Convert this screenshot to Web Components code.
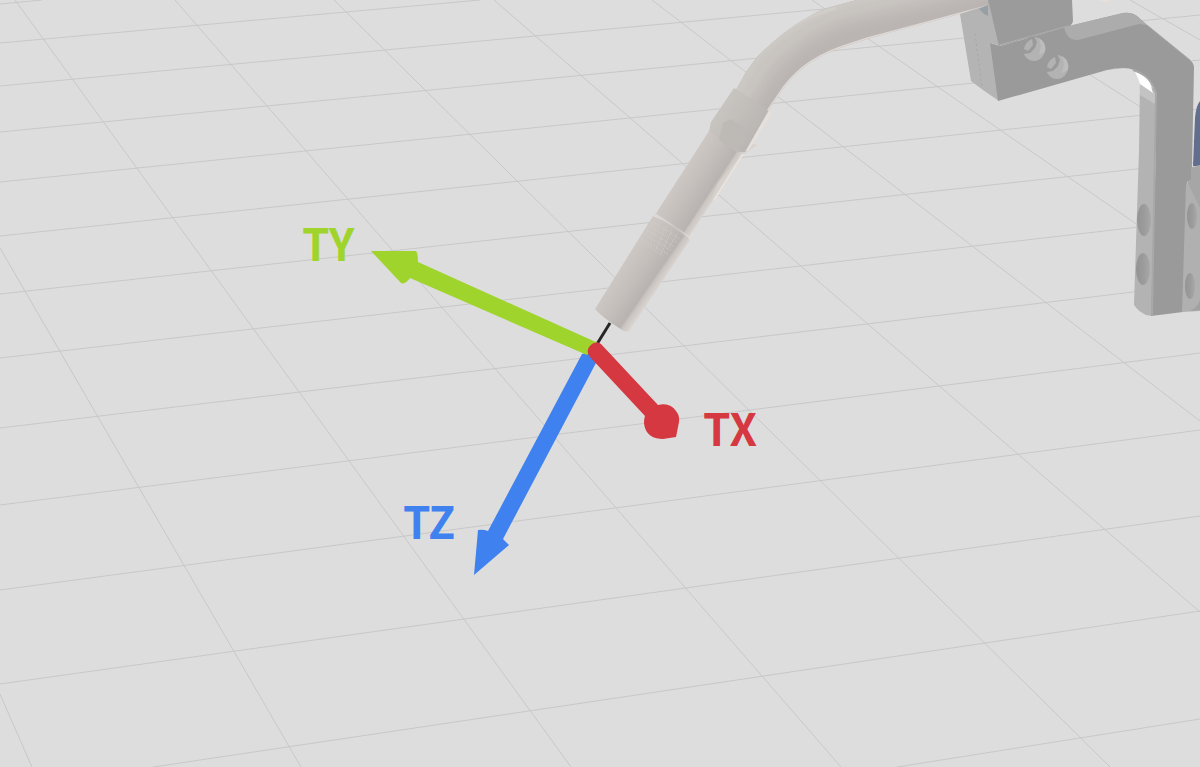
<!DOCTYPE html>
<html lang="en">
<head>
<meta charset="utf-8">
<title>Tool coordinate system</title>
<style>
  html, body { margin: 0; height: 100%; background: #ddd; }
  body { font-family: "Noto Sans CJK SC", "Noto Sans", sans-serif; }
</style>
</head>
<body>
<robot-viewport>
  <floor-grid></floor-grid>
  <robot-tool></robot-tool>
  <axis-gizmo></axis-gizmo>
</robot-viewport>

<script>
const LAYER = `
  :host { display: block; min-width: 0; min-height: 0; overflow: hidden; }
  svg { display: block; width: 100%; height: 100%; }
`;
const VIEW = 'viewBox="0 0 1200 767" preserveAspectRatio="xMidYMid slice"';

class SceneElement extends HTMLElement {
  constructor() {
    super();
    this.attachShadow({ mode: 'open' }).innerHTML = this.template();
  }
}

/* Stacks every scene layer in one grid cell that fills the window. */
customElements.define('robot-viewport', class extends SceneElement {
  template() {
    return `<style>
      :host { display: grid; grid-template: minmax(0, 1fr) / minmax(0, 1fr); height: 100vh; background: #ddd; overflow: hidden; }
      ::slotted(*) { grid-area: 1 / 1; }
    </style><slot></slot>`;
  }
});

/* Floor plane in perspective: x1, y1, x2, y2 of each line. */
customElements.define('floor-grid', class extends SceneElement {
  template() {
    const lines = [
      [0,4,42,0],[0,43,480,0],[0,86,920,0],[0,132,1200,15],[0,182,1200,60],
      [0,236,1200,109],[0,294,1200,162],[0,358,1200,220],[0,428,1200,284],
      [0,505,1200,353],[0,590,1200,430],[0,684,1200,516],[153,767,1200,611],[897,767,1200,719],
      [0,694,32,767],[0,248,301,767],[15,0,571,767],[175,0,841,767],[334,0,1110,767],
      [494,0,1200,612],[652,0,1200,421],[812,0,1200,268],[973,0,1200,145],[1130,0,1200,40]
    ];
    return `<style>${LAYER} path { stroke: #c8c8c8; stroke-width: 1; fill: none; }</style>
      <svg ${VIEW} aria-hidden="true"><path d="${lines.map(([a,b,c,d]) => `M${a} ${b}L${c} ${d}`).join('')}"/></svg>`;
  }
});

customElements.define('robot-tool', class extends SceneElement {
  template() {
    return `<style>${LAYER}</style>
    <svg ${VIEW} role="img" aria-label="Welding torch on mounting bracket">
      <defs>
        <linearGradient id="nozzle" gradientUnits="userSpaceOnUse" x1="625" y1="260" x2="660" y2="284">
          <stop offset="0" stop-color="#cdc8c4"/><stop offset=".45" stop-color="#c3beba"/>
          <stop offset=".8" stop-color="#b8b3b0"/><stop offset=".86" stop-color="#c9c4c0"/><stop offset="1" stop-color="#d8d3cf"/>
        </linearGradient>
        <linearGradient id="tube" gradientUnits="userSpaceOnUse" x1="683" y1="170" x2="718" y2="193">
          <stop offset="0" stop-color="#cdc8c4"/><stop offset=".4" stop-color="#c4bfbb"/>
          <stop offset=".82" stop-color="#b8b3b0"/><stop offset=".86" stop-color="#cac5c1"/><stop offset="1" stop-color="#d8d3cf"/>
        </linearGradient>
        <linearGradient id="sleeve" gradientUnits="userSpaceOnUse" x1="720" y1="108" x2="759" y2="132">
          <stop offset="0" stop-color="#c8c4c0"/><stop offset=".5" stop-color="#c1bdb9"/><stop offset="1" stop-color="#b9b5b2"/>
        </linearGradient>
        <linearGradient id="hole" x1="0" x2="1" y1="0" y2="0">
          <stop offset="0" stop-color="#949494"/><stop offset=".5" stop-color="#9b9b9b"/><stop offset="1" stop-color="#a8a8a8"/>
        </linearGradient>
        <filter id="soft" filterUnits="userSpaceOnUse" x="690" y="-60" width="330" height="220"><feGaussianBlur stdDeviation="2"/></filter>
        <clipPath id="bend"><path d="M736 90L746 72L757 57Q767 47 780 36Q795 24 810 16Q818 11 827 8L860 -1H990V6L907 28L867 39L840 48Q828 52 820 57Q810 62 803 68Q792 77 783 89L768 111L757 132L725 112Z"/></clipPath>
      </defs>

      <!-- bent neck -->
      <g clip-path="url(#bend)" fill="none">
        <rect x="700" y="0" width="300" height="140" fill="#bab5b2"/>
        <g filter="url(#soft)">
          <path d="M724 110L752 62Q784 20 840 3L990 -38" stroke="#ccc8c4" stroke-width="26"/>
          <path d="M736 113L762 69Q796 27 847 13L990 -21" stroke="#c8c4c0" stroke-width="11"/>
          <path d="M743 117L769 75Q801 35 850 20L990 -13" stroke="#c2beba" stroke-width="8"/>
          <path d="M749 121L774 81Q804 42 852 27L990 -6" stroke="#bdb8b5" stroke-width="7"/>
        </g>
        <path d="M776 38Q800 18 836 8" stroke="#d1cdc9" stroke-width="3"/>
        <path d="M768 111L783 89Q792 77 803 68Q820 55 840 48L867 39L990 6" stroke="#ddd8d4" stroke-width="3"/>
      </g>

      <!-- torch body -->
      <path d="M655 215L709 131L757 145L743 155L688 238Z" fill="url(#tube)"/>
      <path d="M709 132L711 122L734 88L752 99L767 110L771 112L746 152L740 152L728 147L716 136Z" fill="url(#sleeve)"/>
      <path d="M719 140L723 123L731 119L746 128L743 142L737 152L728 147Z" fill="#bdb9b5"/>
      <path d="M769 110L772 113L749 150L745 152Z" fill="#e5e0dc"/>
      <path d="M742 154L743 156L715 200L712 199L718 183Z" fill="#d6d1cd"/>
      <path d="M743 154L714 200" stroke="#e9e4e0" stroke-width="2"/>
      <path d="M655 214L689 237" stroke="#dcd7d4" stroke-width="2"/>

      <!-- nozzle -->
      <path d="M653 216L655 217Q677 225 690 240L629 331Q626 333 619 328Q603 318 595 309Z" fill="url(#nozzle)"/>
      <path d="M654 218Q676 226 688 239" stroke="#cbc6c3" fill="none"/>
      <path d="M653 222L680 239M650 226L678 243M647 230L675 247M644 234L672 251M641 238L669 255M643 242L663 256" stroke="#d6d1cd" stroke-dasharray="1 2" fill="none"/>
      <path d="M660 222L651 238M666 226L656 250M672 230L661 254M677 234L669 248" stroke="#d0cbc7" stroke-dasharray="1 1" fill="none"/>
      <path d="M610 323L597 344" stroke="#262626" stroke-width="3"/>

      <!-- far objects cut by the window edge -->
      <path d="M1098 0H1111L1106 2L1101 1Z" fill="#e9e0da"/>
      <path d="M1200 101Q1196 106 1195 118L1193 166H1200Z" fill="#626e8e"/>

      <!-- bracket, lit side faces -->
      <path d="M960 14L988 5V0L1000 46L991 43L999 101L983 90L971 81Z" fill="#b4b4b4"/>
      <path d="M979 9L988 5V16L984 14Z" fill="#96a0a4"/>
      <path d="M975 34L982 88" stroke="#a6a6a6" stroke-dasharray="2 3"/>
      <path d="M1140 80L1157 91L1155 150L1152 316L1146 315Q1138 311 1134 305L1139 150Z" fill="#b3b3b3"/>
      <path d="M1140 83L1155 93V104L1140 95Z" fill="#c3c3c3"/>

      <!-- bracket, dark front faces -->
      <path d="M990 43L1000 46L1066 27L1123 13Q1131 12 1137 16L1147 25L1190 60Q1194 63 1194 68L1192 166L1191 180L1187 182L1183 312L1151 316L1156 150V93Q1153 82 1146 77Q1135 68 1123 68Q1115 68 1107 70L998 101Z" fill="#9a9a9a"/>
      <path d="M988 0H1072L1073 21Q1072 25 1068 27L999 46Z" fill="#9b9b9b"/>
      <path d="M999 45L1068 26" stroke="#adadad" fill="none"/>
      <path d="M1064 27L1123 13Q1131 12 1137 16L1147 25L1139 24L1078 40Q1067 41 1064 27Z" fill="#acacac"/>
      <path d="M1147 25L1190 60" stroke="#a8a8a8"/>
      <path d="M1133 70Q1150 75 1156 93L1155 150L1152 315" stroke="#a8a8a8" stroke-width="2" fill="none"/>
      <path d="M1135 72Q1146 76 1150 83L1153 93L1140 84Q1138 77 1135 72Z" fill="#fff"/>

      <!-- bolts in the arm -->
      <g id="bolt">
        <ellipse cx="1034" cy="49" rx="11" ry="12" fill="#b3b3b3"/>
        <path d="M1039 38Q1047 43 1045 52L1039 55L1041 46Z" fill="#bdbdbd"/>
        <path d="M1022 55Q1019 38 1034 36L1037 42L1035 48L1030 53L1024 54Z" fill="#9a9a9a"/>
        <path d="M1024 49Q1025 42 1032 39L1033 45L1028 51Z" fill="#b2b2b2"/>
      </g>
      <use href="#bolt" x="23" y="18"/>

      <!-- right flange -->
      <path d="M1191 180L1192 167L1200 165V311L1182 312L1186 184Z" fill="#b0b0b0"/>
      <path d="M1191 168L1200 166V208L1187 181L1191 180Z" fill="#a6a6a6"/>
      <path d="M1200 300Q1197 308 1190 311L1200 310Z" fill="#a1a1a1"/>
      <g fill="url(#hole)">
        <ellipse cx="1144" cy="220" rx="7" ry="16"/>
        <ellipse cx="1143" cy="269" rx="7" ry="16"/>
        <ellipse cx="1192" cy="216" rx="5" ry="13"/>
        <ellipse cx="1190" cy="286" rx="5" ry="13"/>
      </g>
    </svg>`;
  }
});

customElements.define('axis-gizmo', class extends SceneElement {
  template() {
    return `<style>${LAYER}
      text { font-size: 44px; font-weight: 700; }
      .x { fill: #d63841; } .y { fill: #9fd42c; } .z { fill: #3f81ef; }
    </style>
    <svg ${VIEW} role="group" aria-label="Tool axes">
      <path class="z" d="M582 354L597 350L597 361L503 539L509 545L474 575L478 530Q483 529 488 531Z"/>
      <path class="y" d="M371 251H416Q418 253 418 262L598 343L587 355L410 278Q405 285 401 283Z"/>
      <path class="x" d="M590 357Q586 352 589 347Q595 340 601 344L658 405Q670 402 676 411Q680 416 679 422L676 437L663 439Q649 439 645 428Q643 422 645 416Z"/>
      <text class="y" x="302" y="261">TY</text>
      <text class="z" x="403" y="539">TZ</text>
      <text class="x" x="703" y="446">TX</text>
    </svg>`;
  }
});
</script>
</body>
</html>
